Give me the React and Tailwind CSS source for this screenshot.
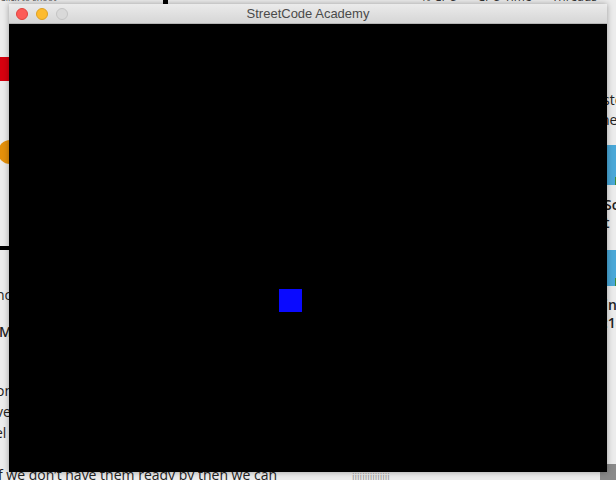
import React from "react";

const txt = "text-[14px] leading-[18px] text-[#222] whitespace-nowrap";

export default function App() {
  return (
    <div
      className="w-[616px] h-[480px] overflow-hidden bg-[#ececec] grid grid-cols-[9px_598px_9px] grid-rows-[4px_468px_8px]"
      style={{ fontFamily: '"Open Sans", "Liberation Sans", sans-serif' }}
    >
      {/* top strip of the desktop behind */}
      <div className="col-span-3 flex items-end overflow-hidden text-[12px] leading-[14px] text-[#333] whitespace-nowrap">
        <span className="text-[9px] leading-[10px] text-[#444] w-[163px] shrink-0 mb-[1px]">Click to shoot</span>
        <span className="w-[5px] h-[4px] bg-black shrink-0" />
        <span className="ml-[253px] flex gap-[20px] shrink-0">
          <span>% CPU</span>
          <span>CPU Time</span>
          <span>Threads</span>
        </span>
        <span className="ml-[20px] shrink-0">Id</span>
      </div>

      {/* left strip */}
      <div className="flex flex-col overflow-visible">
        <div className="h-[53px] shrink-0" />
        <div className="w-[10px] h-[24px] bg-[#d7000f] shrink-0" />
        <div className="h-[59px] shrink-0" />
        <div className="w-[24px] h-[24px] -ml-[2px] rounded-full bg-[#e4900a] shrink-0" />
        <div className="h-[82px] shrink-0" />
        <div className="w-[10px] h-[4px] bg-black shrink-0" />
        <div className="flex flex-col -ml-[4px] mt-[36px] gap-[19px]">
          <span className={txt}>nc</span>
          <span className={txt + " font-semibold ml-[3px]"}>Mo</span>
        </div>
        <div className="flex flex-col -ml-[4px] mt-[41px] gap-[3px]">
          <span className={txt + " text-[#1b7a8a]"}>on</span>
          <span className={txt}>ve</span>
          <span className={txt + " -ml-[1px]"}>el</span>
        </div>
      </div>

      {/* window */}
      <div className="relative z-10 flex flex-col shadow-[0_0_6px_rgba(0,0,0,0.35)]">
        <div className="relative h-[20px] shrink-0 flex items-center justify-center bg-gradient-to-b from-[#ebebeb] to-[#d6d6d6] border-b border-[#b5b5b5] rounded-t-[4px]">
          <div className="absolute left-[7px] top-[4px] flex gap-[8px]">
            <div className="w-[12px] h-[12px] rounded-full bg-[#fc5b57] border border-[#e0443e]" />
            <div className="w-[12px] h-[12px] rounded-full bg-[#fdbb2e] border border-[#dea123]" />
            <div className="w-[12px] h-[12px] rounded-full bg-[#d9d9d9] border border-[#c4c4c4]" />
          </div>
          <span
            className="text-[13px] text-[#4a4a4a] leading-none"
            style={{ fontFamily: '"Liberation Sans", "Open Sans", sans-serif' }}
          >
            StreetCode Academy
          </span>
        </div>
        <div className="flex-1 bg-black pt-[265px] pl-[270px]">
          <div className="w-[23px] h-[23px] bg-[#0a0aff]" />
        </div>
      </div>

      {/* right strip */}
      <div className="flex flex-col overflow-visible">
        <div className="flex flex-col -ml-[4px] mt-[87px] gap-[2px]">
          <span className={txt}>sto</span>
          <span className={txt + " -ml-[2px]"}>ne</span>
        </div>
        <div className="relative w-[12px] h-[40px] bg-[#4aa8d8] mt-[16px] shrink-0">
          <div className="absolute right-0 bottom-0 w-[4px] h-[8px] bg-[#3c8c3c]" />
        </div>
        <div className="flex flex-col -ml-[3px] mt-[11px]">
          <span className={txt + " font-semibold"}>Sc</span>
          <span className={txt + " font-semibold"}>t</span>
        </div>
        <div className="relative w-[12px] h-[36px] bg-[#4aa8d8] mt-[18px] shrink-0">
          <div className="absolute right-0 bottom-0 w-[4px] h-[8px] bg-[#3c8c3c]" />
        </div>
        <div className="flex flex-col -ml-[3px] mt-[10px]">
          <span className={txt + " font-semibold"}>in</span>
          <span className={txt + " font-semibold"}>:18</span>
        </div>
        <div className="flex-1" />
        <div className="w-[16px] h-[8px] -ml-[7px] bg-[#8a8a8a] shrink-0" />
      </div>

      {/* bottom strip */}
      <div className="col-span-3 flex items-start overflow-visible whitespace-nowrap">
        <span className="text-[14px] leading-[14px] text-[#222] -ml-[2px] -mt-[4px] shrink-0">
          f we don’t have them ready by then we can
        </span>
        <span className="ml-[75px] text-[10px] leading-[10px] text-[#999] shrink-0">iiiiiiiiiiiiiii</span>
        <span className="flex-1" />
        <span className="w-[16px] h-[8px] bg-[#8a8a8a] shrink-0" />
      </div>
    </div>
  );
}
